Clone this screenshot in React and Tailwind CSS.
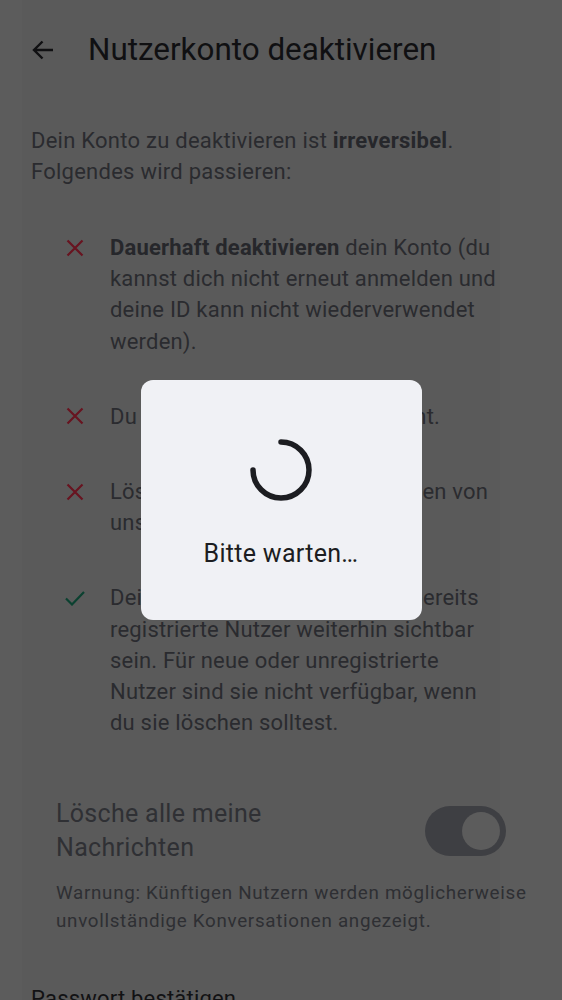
import React from 'react'

const font = { fontFamily: 'Roboto, "Noto Sans", sans-serif' }

function CloseMark() {
  return (
    <svg width="18" height="18" viewBox="0 0 18 18" className="text-[#681420]">
      <path d="M1.5 1.5L16.5 16.5M16.5 1.5L1.5 16.5" stroke="currentColor" strokeWidth="2.2" fill="none" />
    </svg>
  )
}

function CheckMark() {
  return (
    <svg width="20" height="16" viewBox="0 0 20 16" className="text-[#0b4130]">
      <path d="M1 8.5L7 14.5L19 2" stroke="currentColor" strokeWidth="2.2" fill="none" />
    </svg>
  )
}

function Item({ icon, children }) {
  return (
    <div className="flex gap-[25px] pl-[65px]">
      <div className="flex h-[31px] w-[20px] shrink-0 items-center justify-center">{icon}</div>
      <p className="whitespace-nowrap text-[22px] leading-[31.2px] tracking-[0.2px] text-[#2a2b2f]">{children}</p>
    </div>
  )
}

function Spinner() {
  return (
    <svg width="64" height="64" viewBox="0 0 64 64">
      <path
        d="M32 4 A28 28 0 1 1 4 32"
        stroke="#1c1d21"
        strokeWidth="5.5"
        strokeLinecap="round"
        fill="none"
      />
    </svg>
  )
}

export default function App() {
  return (
    <div
      className="h-[1000px] overflow-hidden bg-[linear-gradient(to_right,#5c5c5c_22px,#5a5a5a_22px,#5a5a5a_500px,#5c5c5c_500px)]"
      style={font}
    >
      <header className="flex h-[100px] items-center pl-[31px]">
        <svg width="24" height="24" viewBox="0 0 24 24" className="text-[#101012]">
          <path d="M22 12H3.5M11.5 3.5L3 12l8.5 8.5" stroke="currentColor" strokeWidth="2.4" fill="none" />
        </svg>
        <h1 className="ml-[33px] text-[31.4px] leading-none text-[#101012]">Nutzerkonto deaktivieren</h1>
      </header>

      <p className="mt-[25px] px-[31px] text-[22px] leading-[31px] tracking-[0.25px] text-[#2a2b2f]">
        Dein Konto zu deaktivieren ist <b className="font-bold text-[#26272b]">irreversibel</b>.
        <br />
        Folgendes wird passieren:
      </p>

      <div className="mt-[45px] flex flex-col gap-[44px]">
        <Item icon={<CloseMark />}>
          <b className="font-bold text-[#26272b]">Dauerhaft deaktivieren</b> dein Konto (du
          <br />
          kannst dich nicht erneut anmelden und
          <br />
          deine ID kann nicht wiederverwendet
          <br />
          werden).
        </Item>
        <Item icon={<CloseMark />}>Du wirst aus allen Chats entfernt.</Item>
        <Item icon={<CloseMark />}>
          Lösche deine Kontoinformationen von
          <br />
          unserem Identitätsserver.
        </Item>
        <Item icon={<CheckMark />}>
          Deine Nachrichten werden für bereits
          <br />
          registrierte Nutzer weiterhin sichtbar
          <br />
          sein. Für neue oder unregistrierte
          <br />
          Nutzer sind sie nicht verfügbar, wenn
          <br />
          du sie löschen solltest.
        </Item>
      </div>

      <div className="mt-[59px] flex items-center justify-between px-[56px]">
        <p className="text-[25px] leading-[34px] tracking-[0.3px] text-[#2f3034]">
          Lösche alle meine
          <br />
          Nachrichten
        </p>
        <div className="flex h-[50px] w-[81px] items-center justify-end rounded-full bg-[#3e3f43] pr-[6px]">
          <div className="h-[38px] w-[38px] rounded-full bg-[#5c5c5c]" />
        </div>
      </div>

      <p className="mt-[15px] px-[56px] whitespace-nowrap text-[18.8px] leading-[27.5px] tracking-[0.7px] text-[#2e2f33]">
        Warnung: Künftigen Nutzern werden möglicherweise
        <br />
        unvollständige Konversationen angezeigt.
      </p>

      <p className="mt-[48px] px-[31px] text-[22px] leading-[31px] tracking-[0.2px] text-[#121214]">
        Passwort bestätigen
      </p>

      <div className="fixed inset-0 flex items-center justify-center">
        <div className="flex h-[240px] w-[281px] flex-col items-center rounded-[12px] bg-[#f0f1f5] pt-[58px]">
          <Spinner />
          <p className="mt-[37px] text-[25px] leading-[30px] tracking-[0.3px] text-[#1c1d21]">Bitte warten…</p>
        </div>
      </div>
    </div>
  )
}
